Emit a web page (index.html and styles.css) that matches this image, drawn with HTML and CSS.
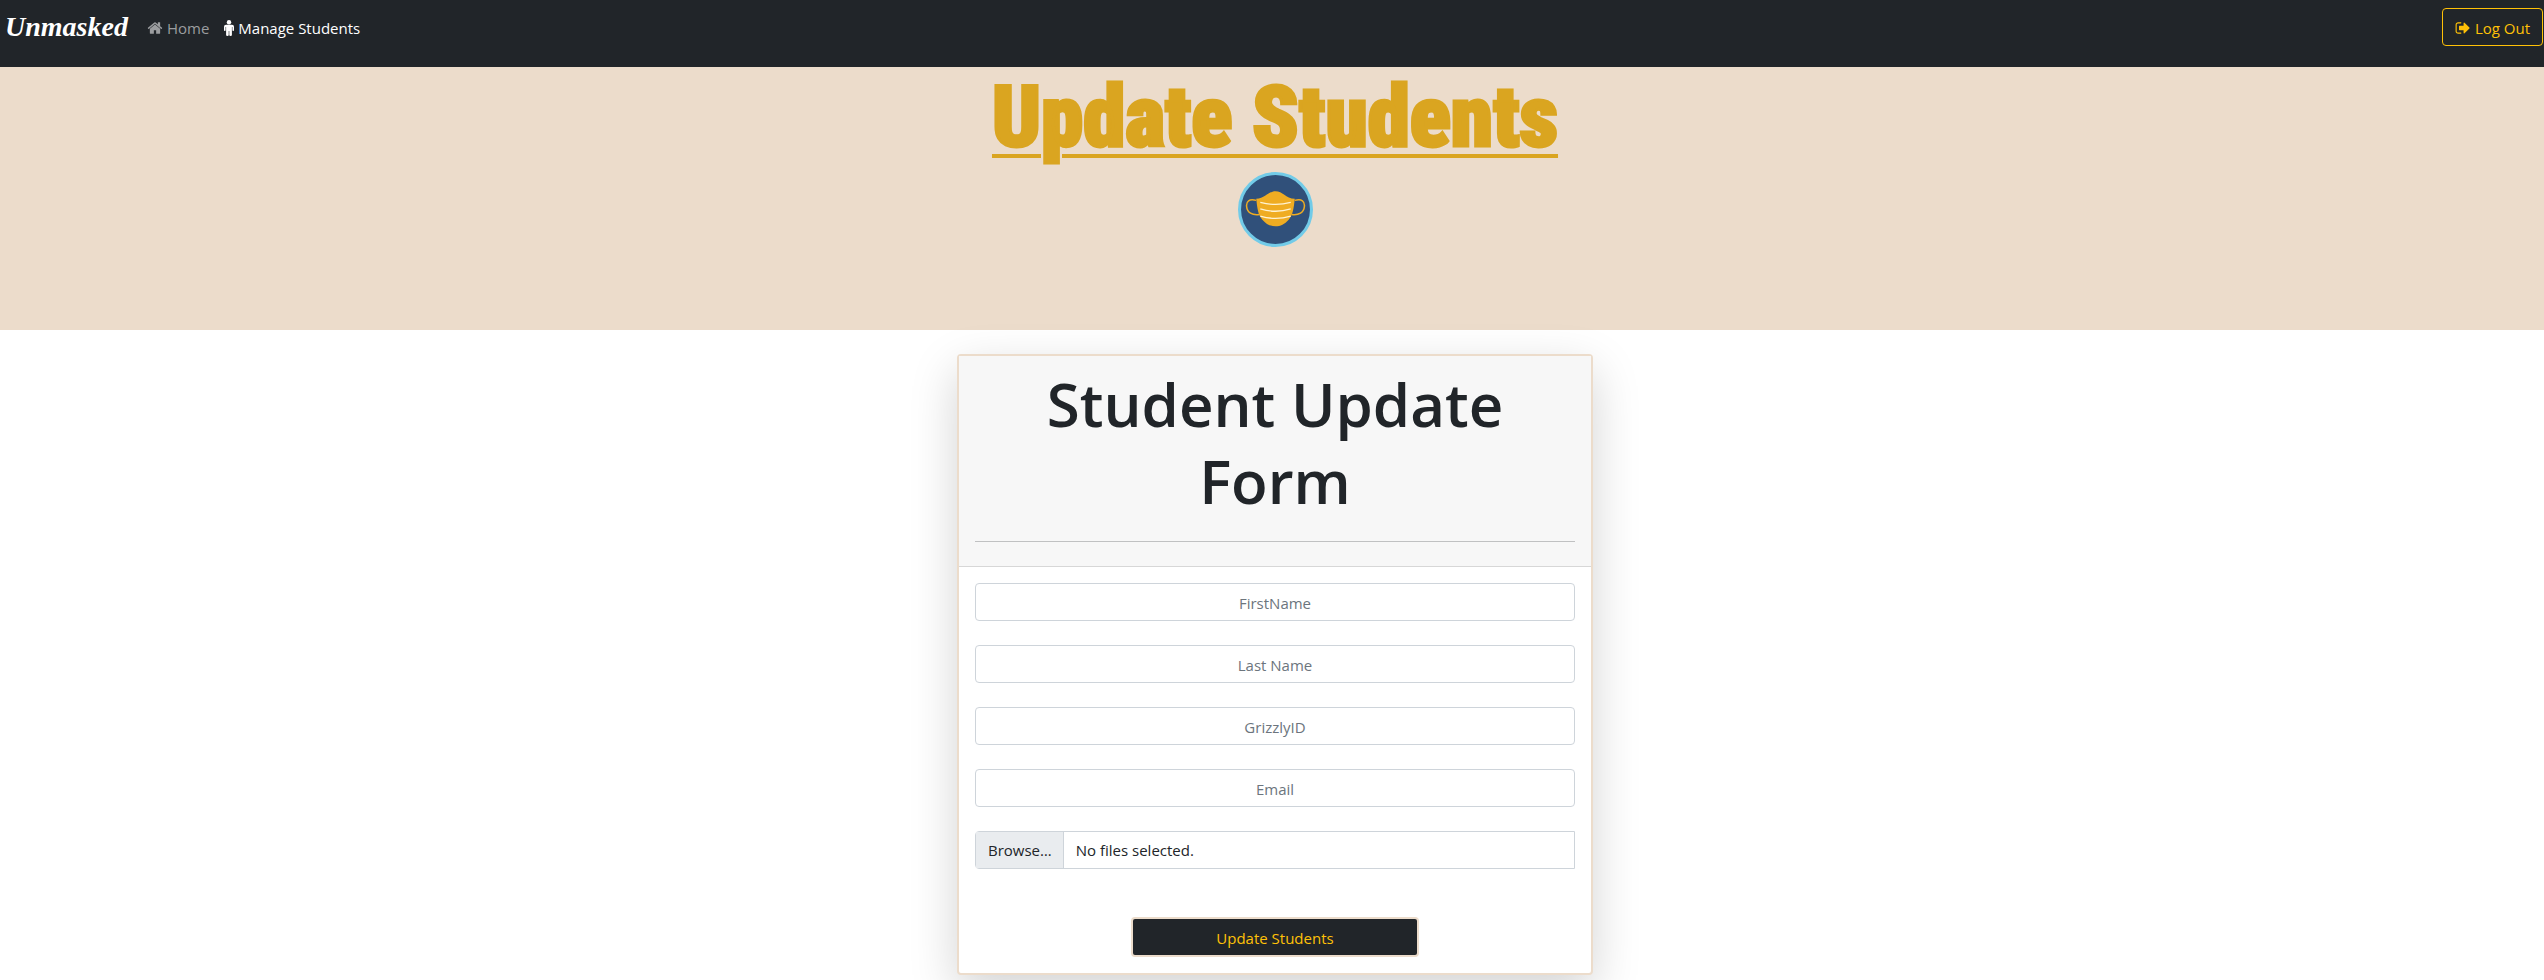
FILE: index.html
```html
<!DOCTYPE html>
<html lang="en">
<head>
<meta charset="utf-8">
<meta name="viewport" content="width=device-width, initial-scale=1">
<title>Update Students</title>
<link rel="stylesheet" href="styles.css">
</head>
<body>
<nav class="navbar">
  <a class="brand" href="#">Unmasked</a>
  <a class="nav-link muted" href="#">
    <svg class="icon" viewBox="64 0 1664 1792" aria-hidden="true"><path d="M1472 992v480q0 26-19 45t-45 19h-384v-384h-256v384h-384q-26 0-45-19t-19-45v-480q0-1 .5-3t.5-3l575-474 575 474q1 2 1 6zm223-69l-62 74q-8 9-21 11h-3q-13 0-21-7l-692-577-692 577q-12 8-24 7-13-2-21-11l-62-74q-8-10-7-23.500t11-21.500l719-599q32-26 76-26t76 26l244 204v-195q0-14 9-23t23-9h192q14 0 23 9t9 23v408l219 182q10 8 11 21.500t-7 23.500z"/></svg>
    Home</a>
  <a class="nav-link" href="#">
    <svg class="icon icon-slim" viewBox="0 0 10 16" aria-hidden="true"><circle cx="5" cy="2.200" r="2.200"/><path d="M2 4.800H8Q10 4.800 10 6.800V10.200Q10 11 9.200 11T8.400 10.200V7H7.900V15Q7.900 16 6.600 16T5.300 15V11H4.700V15Q4.700 16 3.400 16T2.100 15V7H1.600V10.200Q1.600 11 .8 11T0 10.200V6.800Q0 4.800 2 4.800Z"/></svg>
    Manage Students</a>
  <button class="logout" type="button">
    <svg class="icon" viewBox="64 0 1664 1792" aria-hidden="true"><path d="M704 1440q0 4 1 20t.5 26.500-3 23.500-10 19.500-20.500 6.500h-320q-119 0-203.500-84.500t-84.500-203.500v-704q0-119 84.500-203.500t203.500-84.500h320q13 0 22.500 9.500t9.500 22.500q0 4 1 20t.5 26.500-3 23.500-10 19.500-20.500 6.500h-320q-66 0-113 47t-47 113v704q0 66 47 113t113 47h312l11.500 1 11.500 3 8 5.500 7 9 2 13.500zm928-544q0 26-19 45l-544 544q-19 19-45 19t-45-19-19-45v-288h-448q-26 0-45-19t-19-45v-384q0-26 19-45t45-19h448v-288q0-26 19-45t45-19 45 19l544 544q19 19 19 45z"/></svg>
    Log Out</button>
</nav>

<header class="banner">
  <h1 class="banner-title">Update Students</h1>
  <svg class="logo" viewBox="0 0 74 74" role="img" aria-label="Face mask">
    <circle cx="37" cy="37" r="35.500" fill="#30507a" stroke="#72cbe8" stroke-width="3"/>
    <path d="M18 28C11 26 8 29 8.500 34C9 40 14 43 21 42M56 28C63 26 66 29 65.500 34C65 40 60 43 53 42" fill="none" stroke="#efac22" stroke-width="1.500"/>
    <path d="M18 26.500C27 26 30 19 37 19S47 26 56 26.500C55 36 54 43 50 47C46 51.500 42 53.500 37 53.500S28 51.500 24 47C20 43 19 36 18 26.500Z" fill="#efac22"/>
    <path d="M22 30Q37 34 52 30M22 36.500Q37 41 52 36.500M22 43.500Q37 48 52 43.500" fill="none" stroke="#fff3d2" stroke-width="1.300"/>
  </svg>
</header>

<main class="content">
  <form class="card">
    <div class="card-header">
      <h2 class="card-title">Student Update Form</h2>
      <hr class="rule">
    </div>
    <div class="card-body">
      <input class="field" type="text" placeholder="FirstName" aria-label="FirstName">
      <input class="field" type="text" placeholder="Last Name" aria-label="Last Name">
      <input class="field" type="text" placeholder="GrizzlyID" aria-label="GrizzlyID">
      <input class="field" type="email" placeholder="Email" aria-label="Email">
      <label class="file">
        <input class="file-input" type="file" multiple>
        <span class="file-button">Browse…</span>
        <span class="file-text">No files selected.</span>
      </label>
      <button class="submit" type="button">Update Students</button>
    </div>
  </form>
</main>
</body>
</html>
```
FILE: styles.css
```css
* {
  box-sizing: border-box;
}

body {
  margin: 0;
  background: #fff;
  color: #212529;
  font-family: "Segoe UI", "Open Sans", "Noto Sans", sans-serif;
  font-size: 15px;
  line-height: 24px;
}

button,
input {
  font: inherit;
}

.navbar {
  display: flex;
  align-items: flex-start;
  padding: 8px 1px 21px 5px;
  background: #212529;
}

.brand {
  margin-right: 19px;
  color: #fff;
  font-family: "Brush Script MT", "Liberation Serif", cursive;
  font-size: 28px;
  font-style: italic;
  font-weight: 700;
  line-height: 38px;
  text-decoration: none;
}

.nav-link {
  display: flex;
  align-items: center;
  gap: 4px;
  height: 38px;
  margin-right: 15px;
  padding-top: 2px;
  color: #fff;
  text-decoration: none;
}

.muted {
  color: #9b9d9f;
}

.icon {
  width: 16px;
  height: 16px;
  fill: currentColor;
}

.icon-slim {
  width: 10px;
}

.logout {
  display: flex;
  align-items: center;
  gap: 4px;
  height: 38px;
  margin-left: auto;
  padding: 2px 12px 0;
  border: 1px solid #ffc107;
  border-radius: 4px;
  background: transparent;
  color: #ffc107;
}

.banner {
  display: flex;
  flex-direction: column;
  align-items: center;
  padding: 2px 0 83px 6px;
  background: #ecdccb;
}

.banner-title {
  margin: 0 0 6px;
  color: #daa520;
  font-family: Impact, "Roboto Condensed", "Roboto", sans-serif;
  font-size: 85px;
  font-weight: 900;
  line-height: 97px;
  text-decoration: underline;
  text-decoration-thickness: 4px;
  text-underline-offset: 8px;
  -webkit-text-stroke: 3px #daa520;
}

.logo {
  width: 75px;
  height: 75px;
}

.content {
  display: flex;
  justify-content: center;
  padding: 24px 0 5px 6px;
}

.card {
  width: 25vw;
  min-width: 320px;
  border: 2px solid #ecdccb;
  border-radius: 4px;
  background: #fff;
  box-shadow: 0 16px 48px rgba(0, 0, 0, 0.175);
}

.card-header {
  padding: 10px 16px 8px;
  border-bottom: 1px solid #d7d7d7;
  background: #f7f7f7;
}

.card-title {
  margin: 0 0 21px;
  font-size: 60px;
  font-weight: 600;
  line-height: 77px;
  text-align: center;
}

.rule {
  height: 1px;
  margin: 16px 0;
  border: 0;
  background: #c0c1c2;
}

.card-body {
  display: flex;
  flex-direction: column;
  gap: 24px;
  padding: 16px;
}

.field {
  width: 100%;
  height: 38px;
  padding: 7px 12px 5px;
  border: 1px solid #ced4da;
  border-radius: 4px;
  background: #fff;
  text-align: center;
}

.field::placeholder {
  color: #6c757d;
  opacity: 1;
}

.file {
  position: relative;
  display: flex;
  height: 38px;
  border: 1px solid #ced4da;
  border-radius: 4px 0 0 4px;
  line-height: 36px;
}

.file-input {
  position: absolute;
  inset: 0;
  width: 100%;
  opacity: 0;
}

.file-button {
  padding: 0 11px 0 12px;
  border-right: 1px solid #ced4da;
  background: #e9ecef;
}

.file-text {
  padding: 0 12px;
}

.submit {
  align-self: center;
  width: 48%;
  height: 40px;
  margin-top: 24px;
  padding: 2px 12px 0;
  border: 2px solid #ecdccb;
  border-radius: 4px;
  background: #212529;
  color: #ffc107;
}
```
